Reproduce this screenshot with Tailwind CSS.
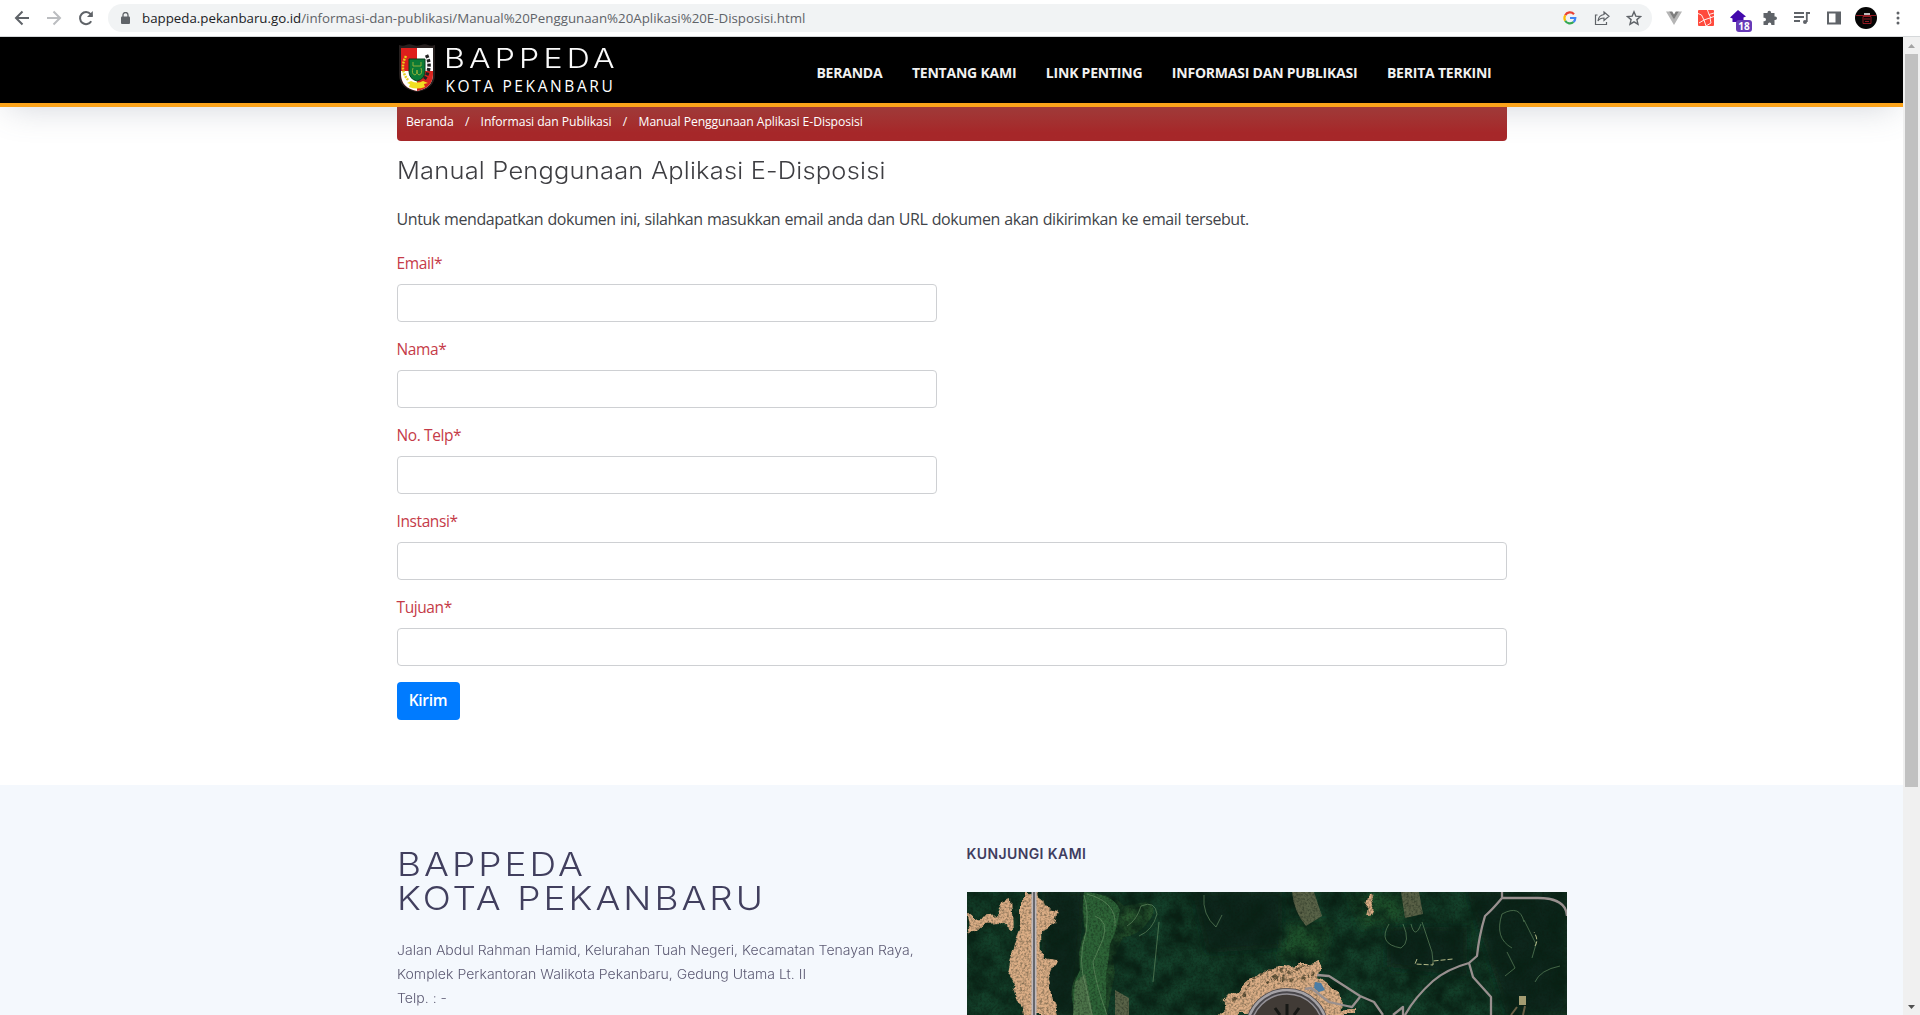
<!DOCTYPE html>
<html lang="id">
<head>
<meta charset="utf-8">
<title>Manual Penggunaan Aplikasi E-Disposisi</title>
<script src="https://cdn.jsdelivr.net/npm/@tailwindcss/browser@4"></script>
</head>
<body class="h-[1015px] w-[1920px] overflow-hidden bg-white flex flex-col">

<!-- Browser toolbar -->
<div class="h-[37px] shrink-0 flex items-center border-b border-[#d5d8da] bg-white text-[#5f6368]">
  <div class="flex items-center w-[108px] pl-[14px] gap-4">
    <svg class="size-4" viewBox="0 0 16 16" fill="none" stroke="#5f6368" stroke-width="2"><path d="M15 8H2.500M8.500 1.500L2 8l6.500 6.500"/></svg>
    <svg class="size-4" viewBox="0 0 16 16" fill="none" stroke="#bbbdc0" stroke-width="2"><path d="M1 8h12.500M7.500 1.500L14 8l-6.500 6.500"/></svg>
    <svg class="size-4" viewBox="0 0 16 16" fill="none" stroke="#5f6368" stroke-width="2"><path d="M13.200 11.200A6 6 0 1 1 12.600 4.200L14 5.800"/><path d="M14.800 1v6H9z" fill="#5f6368" stroke="none"/></svg>
  </div>
  <div class="flex items-center h-7 w-[1544px] rounded-full bg-[#f1f3f4] pl-[13px] pr-[10px]">
    <svg class="w-[9px] h-3" viewBox="0 0 9 12"><rect y="4.500" width="9" height="7.500" rx="1" fill="#5f6368"/><path d="M2 5V3a2.500 2.500 0 0 1 5 0v2" fill="none" stroke="#5f6368" stroke-width="1.300"/></svg>
    <span class="ml-3 pt-px text-[13.300px] font-['Open_Sans','Noto_Sans',sans-serif] whitespace-nowrap"><span class="text-[#202124]">bappeda.pekanbaru.go.id</span><span>/informasi-dan-publikasi/Manual%20Penggunaan%20Aplikasi%20E-Disposisi.html</span></span>
    <div class="ml-auto flex items-center gap-4">
      <svg class="size-4" viewBox="0 0 16 16" fill="none" stroke-width="2.200"><path d="M3.200 5.300A5.400 5.400 0 0 1 12 4.200" stroke="#ea4335"/><path d="M3.200 5.300a5.400 5.400 0 0 0 0 5.400" stroke="#fbbc05"/><path d="M3.200 10.700A5.400 5.400 0 0 0 11.500 12" stroke="#34a853"/><path d="M8 8h5.300a5.400 5.400 0 0 1-1.800 4" stroke="#4285f4"/></svg>
      <svg class="size-4" viewBox="0 0 16 16" fill="none" stroke="#5f6368" stroke-width="1.200"><path d="M3.500 5H1.500v9.500h11V12"/><path d="M10 2l5 4.200-5 4.200V8C7 8 5.200 9 4 11c.3-3.500 2.500-6 6-6.500z"/></svg>
      <svg class="size-4" viewBox="0 0 16 16" fill="none" stroke="#5f6368" stroke-width="1.400"><path d="M8 1.800l1.800 4.300 4.700.4-3.600 3.100 1.100 4.600L8 11.800l-4 2.400 1.100-4.600L1.500 6.500l4.700-.4z"/></svg>
    </div>
  </div>
  <div class="flex items-center gap-4 pl-[14px]">
    <svg class="size-4" viewBox="0 0 16 16"><path d="M0 1.500h3.500L8 9.300l4.500-7.800H16L8 15z" fill="#b5b5b5"/><path d="M3.200 1.500h3L8 4.600l1.800-3.100h3L8 9.500z" fill="#7d7d7d"/></svg>
    <svg class="size-4" viewBox="0 0 16 16"><rect width="16" height="16" rx="1" fill="#ff4a3d"/><path d="M0 3.500l3.500 1.500L6 10l10-3.500M6 10L1 13M9.500 0l1.500 4.500L16 3M11 4.500l2 3.500M6 10l2 6M12 8l1 5-5 3" fill="none" stroke="#fff" stroke-width=".9"/></svg>
    <div class="relative size-4">
      <svg class="size-4" viewBox="0 0 16 16"><path d="M8 0l8 6.500-2.500 1V12H2.500V8.500L0 7.500z" fill="#4309ac"/></svg>
      <span class="absolute left-[6px] top-[10px] w-4 h-3 rounded-[3px] bg-[#673ab7] text-white text-[10px] leading-3 text-center font-bold font-['Open_Sans',sans-serif]">18</span>
    </div>
    <svg class="size-4" viewBox="0 0 16 16"><path d="M5.500 2.500a1.800 1.800 0 0 1 3.600 0V3H12.500v3.500h.7a1.800 1.800 0 0 1 0 3.600h-.7V15H9.300v-.8a1.700 1.700 0 0 0-3.400 0v.8H1.500v-3.800h.8a1.700 1.700 0 0 0 0-3.400h-.8V3h4z" fill="#5f6368"/></svg>
    <svg class="size-4" viewBox="0 0 16 16" fill="none" stroke="#5f6368" stroke-width="1.800"><path d="M0 3h10M0 7h10M0 11h6M12.800 12V3H16"/><circle cx="11" cy="12" r="2" fill="#5f6368" stroke="none"/></svg>
    <svg class="size-4" viewBox="0 0 16 16"><path d="M1 1.500h14v13H1zM3 3.500v9h6.500v-9z" fill="#5f6368" fill-rule="evenodd"/></svg>
    <svg class="size-[22px] -ml-[3px]" viewBox="0 0 22 22"><circle cx="11" cy="11" r="11" fill="#050505"/><path d="M9 6h6v2H9z" fill="#bbb"/><path d="M1 8.500h20M8 9.500h8v7H8zM9 12h6M10 14.500h4" fill="none" stroke="#a31c26" stroke-width=".9"/></svg>
    <svg class="w-1 h-4 ml-[3px]" viewBox="0 0 4 16" fill="#5f6368"><circle cx="2" cy="3" r="1.500"/><circle cx="2" cy="8" r="1.500"/><circle cx="2" cy="13" r="1.500"/></svg>
  </div>
</div>

<div class="flex flex-1 min-h-0">
  <div class="flex-1 flex flex-col min-w-0 overflow-hidden">
    <!-- Site header -->
    <header class="relative h-[70px] shrink-0 bg-black border-b-4 border-[#fba31a] flex justify-center shadow-[0_8px_34px_-8px_rgba(100,110,130,0.300)]">
      <div class="w-[1110px] flex items-center justify-between">
        <div class="flex items-start gap-[9px] pl-[2px] h-full pt-[7px]">
          <svg class="w-[36px] h-[49px]" viewBox="0 0 36 49"><path d="M0 1q4 1.500 7 0t7 0 8 0 7 0 7 0V30q0 15-18 18Q0 45 0 30z" fill="#26201f"/><path d="M2 4h16v43Q2 44 2 30z" fill="#de1f1c"/><path d="M18 4h16v26q0 14-16 17z" fill="#fff"/><path d="M2 27h16v20Q2 44 2 30z" fill="#fff"/><path d="M18 27h16v3q0 14-16 17z" fill="#d8241f"/><path d="M10 15h16v12q0 8-8 10-8-2-8-10z" fill="#0b7a35" stroke="#083f1e" stroke-width="1"/><path d="M14 18v4h8v-4M14 24q-2 6 2 7 2 0 2-5 0 5 2 5 4-1 2-7" fill="none" stroke="#8fae3a" stroke-width="1"/><path d="M7 12q-7 13 2 24" fill="none" stroke="#e8cf1d" stroke-width="2.500" stroke-dasharray="2 1"/><path d="M27.500 11q6 12-2 24" fill="none" stroke="#222" stroke-width="3.500" stroke-dasharray="3 1.500"/><path d="M8 39l4-2q6 3 12 0l5 2-4 1 1 3q-8 3-16 0l1-3z" fill="#f2df21"/></svg>
          <div class="flex flex-col">
            <span class="h-[26px] leading-[28px] text-[27.500px] font-light tracking-[3.600px] origin-left scale-x-[1.165] text-[#fafafa] font-['Inter',sans-serif] whitespace-nowrap">BAPPEDA</span>
            <span class="h-[20px] mt-[6px] leading-[20px] text-[15.500px] font-medium tracking-[2.600px] pl-[2px] text-white font-['Open_Sans',sans-serif] whitespace-nowrap">KOTA PEKANBARU</span>
          </div>
        </div>
        <nav class="flex gap-[29.500px] pr-[15px] pt-[5px] text-[14px] font-bold text-[#f1f1f1] font-['Open_Sans',sans-serif] whitespace-nowrap tracking-[-0.220px]">
          <a>BERANDA</a><a>TENTANG KAMI</a><a>LINK PENTING</a><a>INFORMASI DAN PUBLIKASI</a><a>BERITA TERKINI</a>
        </nav>
      </div>
    </header>

    <main class="h-[678px] shrink-0 flex justify-center">
      <div class="w-[1110px] flex flex-col items-start">
        <div class="relative w-full h-[34px] shrink-0 rounded-b-[4px] bg-linear-to-b from-[#9f3a39] to-[#a62729] to-75% flex items-start pt-[4px] pl-[9.500px] gap-[11.300px] text-[12.200px] leading-[21px] tracking-[-0.080px] text-white font-['Open_Sans',sans-serif] font-medium whitespace-nowrap">
          <span>Beranda</span><span>/</span><span>Informasi dan Publikasi</span><span>/</span><span>Manual Penggunaan Aplikasi E-Disposisi</span>
        </div>
        <h1 class="mt-[14px] h-[32px] leading-[32px] text-[23.500px] font-light tracking-[0.200px] origin-left scale-x-[1.082] text-[#3e3e42] font-['Inter',sans-serif] whitespace-nowrap">Manual Penggunaan Aplikasi E-Disposisi</h1>
        <p class="mt-[20px] h-6 leading-6 text-[16px] tracking-[-0.420px] [word-spacing:0.500px] text-[#414449] font-['Open_Sans',sans-serif] whitespace-nowrap">Untuk mendapatkan dokumen ini, silahkan masukkan email anda dan URL dokumen akan dikirimkan ke email tersebut.</p>
        <form class="w-full mt-[21px] flex flex-col items-start text-[15.500px] tracking-[-0.400px] text-[#c53b48] font-['Open_Sans',sans-serif]">
          <label class="leading-[22px] mb-[10px]">Email*</label><input class="w-[540px] h-[38px] mb-4 rounded border border-[#ced0d3]">
          <label class="leading-[22px] mb-[10px]">Nama*</label><input class="w-[540px] h-[38px] mb-4 rounded border border-[#ced0d3]">
          <label class="leading-[22px] mb-[10px]">No. Telp*</label><input class="w-[540px] h-[38px] mb-4 rounded border border-[#ced0d3]">
          <label class="leading-[22px] mb-[10px]">Instansi*</label><input class="w-full h-[38px] mb-4 rounded border border-[#ced0d3]">
          <label class="leading-[22px] mb-[10px]">Tujuan*</label><input class="w-full h-[38px] mb-4 rounded border border-[#ced0d3]">
          <button type="button" class="w-[63px] h-[38px] rounded bg-[#007bff] text-white text-[15.500px] tracking-[-0.300px] font-semibold">Kirim</button>
        </form>
      </div>
    </main>

    <footer class="flex-1 min-h-0 bg-[#f4f8fd] flex justify-center pt-[60px]">
      <div class="w-[1110px] flex">
        <div class="w-[570px] shrink-0 font-['Inter',sans-serif] whitespace-nowrap">
          <h2 class="text-[33px] leading-[34px] mt-[2px] tracking-[2.700px] origin-left scale-x-[1.120] text-[#413f5e] font-light">BAPPEDA<br>KOTA PEKANBARU</h2>
          <p class="mt-[23px] text-[13px] leading-6 text-[#5c5a73] font-light origin-left scale-x-[1.081]">Jalan Abdul Rahman Hamid, Kelurahan Tuah Negeri, Kecamatan Tenayan Raya,<br>Komplek Perkantoran Walikota Pekanbaru, Gedung Utama Lt. II<br>Telp. : -</p>
        </div>
        <div class="w-[600px] shrink-0">
          <h4 class="text-[14px] leading-[17px] tracking-[0.400px] font-semibold text-[#3f3d5f] font-['Inter',sans-serif]">KUNJUNGI KAMI</h4>
          <svg class="mt-[30px] w-[600px] h-[123px]" viewBox="0 0 600 123">
            <defs>
              <filter id="canopy" x="0" y="0" width="100%" height="100%" color-interpolation-filters="sRGB"><feTurbulence type="fractalNoise" baseFrequency=".05" numOctaves="5" seed="7"/><feColorMatrix values="0 0 0 0 .03  0 0 0 0 .13  0 0 0 0 .08  2 0 0 0 -.6"/></filter>
              <filter id="grain" x="0" y="0" width="100%" height="100%" color-interpolation-filters="sRGB"><feTurbulence type="fractalNoise" baseFrequency=".45" numOctaves="2" seed="4"/><feColorMatrix values="0 0 0 0 .05  0 0 0 0 .1  0 0 0 0 .06  1 0 0 0 -.4"/></filter>
              <filter id="soil" x="-5%" y="-5%" width="110%" height="110%" color-interpolation-filters="sRGB"><feTurbulence type="fractalNoise" baseFrequency=".06" numOctaves="2" seed="3"/><feDisplacementMap in="SourceGraphic" scale="14" xChannelSelector="R" yChannelSelector="G"/></filter>
              <filter id="soft"><feGaussianBlur stdDeviation="4"/></filter>
            </defs>
            <rect width="600" height="123" fill="#13402a"/>
            <path d="M75 0h43l-4 50-6 73H75zM225 0h90v56l-75 5zM420 35h80v50l-80-10zM500 0h100v123h-60z" fill="#0a281a" filter="url(#soft)"/>
            <path d="M380 0h60v28l-45 8zM320 30h45l-8 40h-45z" fill="#1f4f29" filter="url(#soft)"/>
            <path d="M117 0q30 2 40 14l22-4q14 6 2 20-10 14-25 15-12 25-8 35-5 25-8 43h-30q-12-22 2-45-2-20 6-38-4-22-1-40z" fill="#2b5c31"/>
            <rect width="600" height="123" filter="url(#canopy)"/>
            <path d="M117 0q30 2 36 18-4 24-10 34-2 22-4 30 0 20 0 41h-30q-8-22 4-45-2-20 6-38-4-22-2-40z" fill="#2f6638" opacity=".9"/>
            <path d="M108 90l10-8 4 20 4 21h-20z" fill="#4c7349"/>
            <path d="M148 98l14 8v17h-14zM325 0h22l8 24-16 10q-12-14-14-34zM434 0h18l4 22-18 4z" fill="#666a4e" opacity=".85"/>
            <g filter="url(#soil)" fill="#dcae86">
              <path d="M55 0h18l4 15 12 3-3 14-10 6 1 28 12 2-8 18 5 24 4 13H56l-8-23-8-16 8-32 7-18z"/>
              <path d="M0 18l10 9 20-3 5-18 8-3 2 38-12-10-15 1-14 12z"/>
              <path d="M248 123l22-23 22-20 35-7 26-4-2 18 20 12 4 18h14v6z"/>
              <path d="M404 2l6 2-8 18h-3z"/>
            </g>
            <path d="M285 88l14-10 24 2 16-8M298 92l12-8 28 3 8-8M268 112l20-22" fill="none" stroke="#6d5b3f" stroke-width="3" stroke-dasharray="4 3 1 2" filter="url(#soil)"/>
            <rect width="600" height="123" filter="url(#grain)"/>
            <path d="M67 0v123" stroke="#bdb8bc" stroke-width="5"/><path d="M67 0v123" stroke="#4a4b50" stroke-width="1.500"/>
            <g fill="none" stroke="#6c9468" stroke-width=".8" opacity=".75"><path d="M117 3q5 15 2 37-9 28 0 55l6 28M128 24q14 5 8 23l-10 23q2 20 14 53M120 2q30 8 28 32M160 34q10-6 14-20 14-6 16 8-4 16-18 22M237 3q-2 20 12 32l6-12M422 32q-12 20 12 24 10-6 2-24M444 32q4 16 10 0M535 22q18-10 22 8M535 22q-8 24 10 34M557 28l12 24-4 14M540 60l8 16-10 8M568 90q5-12 25-16M455 30l10 30 1 10M192 30l-6 60"/></g>
            <path d="M450 67l-2 5 18 1v-4l20-2M568 54q4-6-1-14" fill="none" stroke="#b5ba88" stroke-width="1" stroke-dasharray="5 2"/>
            <path d="M552 104h7v9h-7z" fill="#a49d72"/><path d="M550 115l-6 8M558 114l-2 9" stroke="#695f45" stroke-width="2"/>
            <circle cx="320" cy="138" r="39" fill="#413b36" stroke="#48464a" stroke-width="6"/>
            <path d="M320 112v11M308 116l5 7M332 116l-5 7" stroke="#171815" stroke-width="3"/>
            <circle cx="320" cy="138" r="40" fill="none" stroke="#a5a2a6" stroke-width="2.500"/><circle cx="320" cy="138" r="36" fill="none" stroke="#949196" stroke-width="1.500"/>
            <path d="M348 90l6 1 4 7-6 2-5-4z" fill="#4b7da6"/>
            <g fill="none" stroke="#99908f" stroke-width="2.300" stroke-linejoin="round"><path d="M350 83l12 1 31 20 14 6 9 13M338 97l6-1 18 14 18 4 5 1 8-10M535 0v6q-10 12-17 18-6 20-8 40l-8 7q-22 6-36 18-18 16-28 34M502 71l4 14 18 20v18M535 6h36q28 0 29 18M426 123l10-8v8"/></g>
          </svg>
        </div>
      </div>
    </footer>
  </div>

  <!-- Scrollbar -->
  <div class="w-[17px] shrink-0 bg-[#f0f0f0] flex flex-col items-center">
    <svg class="h-[17px] w-[17px] shrink-0" viewBox="0 0 17 17"><path d="M5 11l3.500-4 3.500 4z" fill="#a3a3a3"/></svg>
    <div class="w-[13px] h-[733px] bg-[#c1c1c1]"></div>
    <svg class="mt-auto h-[17px] w-[17px] shrink-0" viewBox="0 0 17 17"><path d="M5 7l3.500 4L12 7z" fill="#505050"/></svg>
  </div>
</div>
</body>
</html>
